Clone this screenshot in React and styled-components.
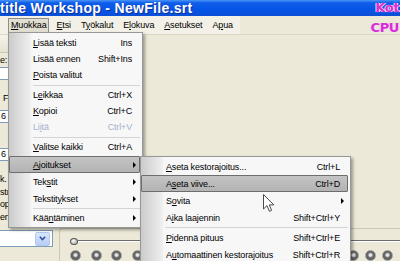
import React from 'react';
import styled, { createGlobalStyle, css } from 'styled-components';

const GlobalStyle = createGlobalStyle`
  html, body {
    margin: 0;
    padding: 0;
  }
  body {
    width: 400px;
    height: 261px;
    overflow: hidden;
    background: #ece9d8;
  }
`

const Window = styled.div`
  position: relative;
  width: 400px;
  height: 261px;
  overflow: hidden;
  display: flex;
  flex-direction: column;
  background: #ece9d8;
  font-family: "Liberation Sans", Arial, sans-serif;
  font-size: 9px;
  letter-spacing: -0.15px;
  color: #000;
`

const TitleBar = styled.div`
  flex: 0 0 16px;
  display: flex;
  align-items: center;
  background: linear-gradient(#4a95f7 0%, #0f5de9 18%, #0654e6 60%, #0b4fd6 100%);
`

const Title = styled.span`
  color: #fff;
  font-weight: bold;
  font-size: 14px;
  line-height: 16px;
  letter-spacing: 0.3px;
  white-space: nowrap;
  text-shadow: 1px 1px 0 #0c2f9c;
`

const MenuBar = styled.div`
  flex: 0 0 18px;
  display: flex;
  border-bottom: 1px solid #dcd7c4;
`

const MenuBand = styled.div`
  width: 240px;
  display: flex;
  align-items: center;
  padding-left: 8px;
  box-sizing: border-box;
  background: #f3f1e7;
`

const MenuTitle = styled.div`
  height: 13px;
  line-height: 13px;
  padding: 0 2px;
  margin-right: 4px;
  border: 1px solid ${p => p.$open ? '#8e8e8e' : 'transparent'};
  background: ${p => p.$open ? '#e2dfd2' : 'transparent'};
  white-space: nowrap;
`

const Mn = styled.span`
  text-decoration: underline;
`

const Body = styled.div`
  flex: 1;
  display: flex;
  flex-direction: column;
  min-height: 0;
`

const Workspace = styled.div`
  flex: 1;
  display: flex;
  min-height: 0;
`

const LeftPane = styled.div`
  width: 55px;
  display: flex;
  flex-direction: column;
  overflow: hidden;
`

const ToolStrip = styled.div`
  flex: 0 0 18px;
  box-sizing: border-box;
  border-bottom: 1px solid #cbc6b2;
  background: linear-gradient(#f6f4ec, #e6e2d2);
`

const FieldLabel = styled.div`
  flex: 0 0 12px;
  line-height: 12px;
  margin-top: ${p => p.$mt}px;
  padding-left: ${p => p.$pl || 0}px;
  white-space: nowrap;
`

const Input = styled.div`
  flex: 0 0 13px;
  line-height: 11px;
  margin: ${p => p.$mt}px 0 0 -2px;
  padding-left: 2px;
  border: 1px solid #7f9db9;
  box-sizing: border-box;
  background: #fff;
`

const NoteBox = styled.div`
  flex: 0 0 56px;
  margin-top: 7px;
  padding-top: 5px;
  box-sizing: border-box;
  line-height: 12.5px;
  white-space: nowrap;
`

const Stage = styled.div`
  flex: 1;
`

const Footer = styled.div`
  flex: 0 0 33px;
  display: flex;
`

const ComboCell = styled.div`
  width: 55px;
  padding-top: 5px;
  box-sizing: border-box;
`

const Combo = styled.div`
  height: 17px;
  width: 55px;
  margin-left: -2px;
  display: flex;
  justify-content: flex-end;
  align-items: center;
  padding-right: 2px;
  box-sizing: border-box;
  border: 1px solid #7f9db9;
  background: #fff;
`

const ComboButton = styled.div`
  width: 13px;
  height: 12px;
  border-radius: 2px;
  display: flex;
  align-items: center;
  justify-content: center;
  background: linear-gradient(#d9e6fd, #b6cdf7);
  border: 1px solid #b5c9ef;
`

const PlayerPanel = styled.div`
  flex: 1;
  margin: 3px 0 0 4px;
  border-top: 1px solid #cdc8b4;
  border-left: 1px solid #cdc8b4;
  border-top-left-radius: 4px;
  display: flex;
  flex-direction: column;
  padding: 8px 0 0 10px;
  box-sizing: border-box;
  overflow: hidden;
`

const SliderRow = styled.div`
  flex: 0 0 8px;
  display: flex;
  align-items: center;
`

const Knob = styled.div`
  width: 8px;
  height: 7px;
  border-radius: 50%;
  border: 1px solid #555;
  background: radial-gradient(circle at 40% 35%, #fff, #9a9a9a);
  box-sizing: border-box;
`

const Track = styled.div`
  flex: 1;
  height: 1px;
  background: #6c6c6c;
  border-bottom: 1px solid #fff;
`

const ButtonRow = styled.div`
  flex: 0 0 11px;
  display: flex;
  justify-content: space-between;
  margin-top: 5px;
  padding-right: 7px;
`

const ButtonGroup = styled.div`
  display: flex;
  gap: ${p => p.$gap}px;
`

const RoundButton = styled.div`
  width: 11px;
  height: 11px;
  border-radius: 50%;
  background: radial-gradient(circle at 50% 45%, #e4e4e4 0 18%, #6b6b6b 40%, #4a4a4a 100%);
  border: 1px solid #9b9b9b;
  box-sizing: border-box;
`

const Menu = styled.div`
  position: absolute;
  left: ${p => p.$x}px;
  top: ${p => p.$y}px;
  width: ${p => p.$w}px;
  padding: ${p => p.$pt}px 0 1px;
  box-sizing: border-box;
  background: #f7f7f7;
  border: 1px solid #979797;
  box-shadow: 2px 2px 3px rgba(0, 0, 0, 0.35);
  &::before {
    content: '';
    position: absolute;
    left: 0;
    top: 0;
    bottom: 0;
    width: 22px;
    background: linear-gradient(to right, #cbcbcb, #f0f0f0);
  }
`

const Item = styled.div`
  position: relative;
  display: flex;
  align-items: center;
  height: ${p => p.$h}px;
  margin: ${p => p.$mt || 0}px 2px 0 0;
  padding: 0 7px 0 ${p => p.$pl}px;
  border: 1px solid transparent;
  border-radius: 1px;
  box-sizing: border-box;
  white-space: nowrap;
  color: ${p => p.$disabled ? '#a4b2cc' : '#000'};
  ${p => p.$active && css`
    border-color: #6e6e6e;
    background: linear-gradient(#c4c4c4, #b3b3b3);
  `}
`

const Shortcut = styled.span`
  margin-left: auto;
`

const Arrow = styled.span`
  margin: 0 -4px 0 auto;
  width: 0;
  height: 0;
  border-top: 3px solid transparent;
  border-bottom: 3px solid transparent;
  border-left: 3px solid #000;
`

const Separator = styled.div`
  position: relative;
  height: ${p => p.$h}px;
  display: flex;
  align-items: center;
  padding: 0 2px 0 24px;
  &::after {
    content: '';
    flex: 1;
    height: 1px;
    background: #d4d4d4;
  }
`

const Cursor = styled.svg`
  position: absolute;
  left: 263px;
  top: 194px;
`

const Watermark = styled.div`
  position: absolute;
  right: ${p => p.$r}px;
  top: ${p => p.$y}px;
  font-family: "DejaVu Sans", sans-serif;
  font-weight: bold;
  font-size: 13px;
  letter-spacing: -0.4px;
  color: #d52fd3;
  text-shadow: 0 0 1px #fff, 1px 0 0 #f6c6f3, -1px 0 0 #f6c6f3;
`

const Label = ({ text, u }) =>
  u == null ? text : (
    <>
      {text.slice(0, u)}
      <Mn>{text[u]}</Mn>
      {text.slice(u + 1)}
    </>
  )

const menuTitles = [
  { text: 'Muokkaa', u: 0, open: true },
  { text: 'Etsi', u: 0 },
  { text: 'Työkalut', u: 1 },
  { text: 'Elokuva', u: 1 },
  { text: 'Asetukset', u: 0 },
  { text: 'Apua', u: 1 },
]

const editItems = [
  { text: 'Lisää teksti', u: 0, key: 'Ins' },
  { text: 'Lisää ennen', key: 'Shift+Ins' },
  { text: 'Poista valitut', u: 0 },
  { sep: 4 },
  { text: 'Leikkaa', u: 1, key: 'Ctrl+X' },
  { text: 'Kopioi', u: 0, key: 'Ctrl+C' },
  { text: 'Liitä', u: 2, key: 'Ctrl+V', disabled: true },
  { sep: 4 },
  { text: 'Valitse kaikki', u: 0, key: 'Ctrl+A' },
  { text: 'Ajoitukset', u: 0, sub: true, active: true, h: 17, mt: 1 },
  { text: 'Tekstit', u: 3, sub: true, h: 17 },
  { text: 'Tekstitykset', u: 7, sub: true, h: 17 },
  { sep: 3 },
  { text: 'Kääntäminen', u: 3, sub: true },
]

const timingItems = [
  { text: 'Aseta kestorajoitus...', u: 0, key: 'Ctrl+L' },
  { text: 'Aseta viive...', u: 1, key: 'Ctrl+D', active: true },
  { text: 'Sovita', u: 1, sub: true },
  { text: 'Aika laajennin', u: 1, key: 'Shift+Ctrl+Y' },
  { sep: 3 },
  { text: 'Pidennä pituus', u: 0, key: 'Shift+Ctrl+E' },
  { text: 'Automaattinen kestorajoitus', u: 1, key: 'Shift+Ctrl+R' },
]

const MenuList = ({ items, x, y, w, pt, pl, rowH }) => (
  <Menu $x={x} $y={y} $w={w} $pt={pt}>
    {items.map((it, i) =>
      it.sep ? (
        <Separator key={i} $h={it.sep} />
      ) : (
        <Item key={i} $h={it.h || rowH} $mt={it.mt} $pl={pl} $active={it.active} $disabled={it.disabled}>
          <Label text={it.text} u={it.u} />
          {it.key && <Shortcut>{it.key}</Shortcut>}
          {it.sub && <Arrow />}
        </Item>
      )
    )}
  </Menu>
)

export default function App() {
  return (
    <Window>
      <GlobalStyle />
      <TitleBar>
        <Title>title Workshop - NewFile.srt</Title>
      </TitleBar>
      <MenuBar>
        <MenuBand>
          {menuTitles.map(m => (
            <MenuTitle key={m.text} $open={m.open}>
              <Label text={m.text} u={m.u} />
            </MenuTitle>
          ))}
        </MenuBand>
      </MenuBar>
      <Body>
        <Workspace>
          <LeftPane>
            <ToolStrip />
            <FieldLabel $mt={1}>e:</FieldLabel>
            <Input $mt={1} />
            <FieldLabel $mt={12} $pl={3}>F</FieldLabel>
            <Input $mt={6}>6</Input>
            <Input $mt={25}>6</Input>
            <NoteBox>
              k.<br />str<br />op<br />en
            </NoteBox>
          </LeftPane>
          <Stage />
        </Workspace>
        <Footer>
          <ComboCell>
            <Combo>
              <ComboButton>
                <svg width="7" height="5" viewBox="0 0 7 5">
                  <path d="M0.8 0.8 L3.5 3.6 L6.2 0.8" fill="none" stroke="#2d4fa0" strokeWidth="1.5" />
                </svg>
              </ComboButton>
            </Combo>
          </ComboCell>
          <PlayerPanel>
            <SliderRow>
              <Knob />
              <Track />
            </SliderRow>
            <ButtonRow>
              <ButtonGroup $gap={9.5}>
                <RoundButton />
                <RoundButton />
                <RoundButton />
                <RoundButton />
              </ButtonGroup>
              <ButtonGroup $gap={6}>
                <RoundButton />
                <RoundButton />
                <RoundButton />
              </ButtonGroup>
            </ButtonRow>
          </PlayerPanel>
        </Footer>
      </Body>

      <MenuList items={editItems} x={8} y={32} w={135} pt={2} pl={23} rowH={16} />
      <MenuList items={timingItems} x={140} y={156} w={211} pt={1} pl={24} rowH={17} />

      <Cursor width="12" height="19" viewBox="0 0 12 19">
        <path d="M0.5 0.5 L0.5 15 L4 11.6 L6.4 17.3 L8.6 16.4 L6.3 10.9 L10.8 10.9 Z" fill="#fff" stroke="#4a4a4a" strokeWidth="1" strokeLinejoin="round" />
      </Cursor>

      <Watermark $r={1} $y={0}>Kot</Watermark>
      <Watermark $r={1} $y={20}>CPU</Watermark>
    </Window>
  )
}
